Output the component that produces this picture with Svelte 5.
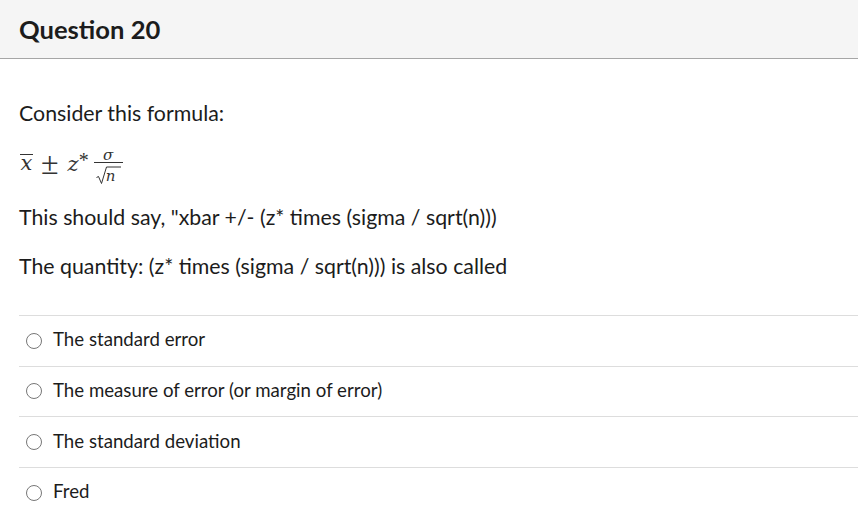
<script>
  const answers = [
    'The standard error',
    'The measure of error (or margin of error)',
    'The standard deviation',
    'Fred'
  ];
</script>

<div class="question">
  <div class="header"><h2>Question 20</h2></div>
  <div class="body">
    <p>Consider this formula:</p>
    <div class="formula">
      <span class="xbar">x</span>
      <span class="pm">±</span>
      <span class="z">z</span><span class="star">*</span>
      <span class="frac">
        <span class="num">σ</span>
        <span class="den">
          <svg class="rad" width="25" height="19" viewBox="0 0 25 19" aria-hidden="true">
            <path d="M0.5 11.5 L2.5 10.5 L5.5 17.5 L10.5 1 L25 1" fill="none" stroke="#333" stroke-width="1" />
          </svg>
          <span class="n">n</span>
        </span>
      </span>
    </div>
    <p>This should say, "xbar +/- (z* times (sigma / sqrt(n)))</p>
    <p>The quantity: (z* times (sigma / sqrt(n))) is also called</p>
  </div>
  <div class="answers">
    {#each answers as answer}
      <label class="answer">
        <span class="radio"></span>
        <span class="text">{answer}</span>
      </label>
    {/each}
  </div>
</div>

<style>
  :global(body) {
    background: #fff;
    color: #1c1c1c;
    font-family: Lato, "Liberation Sans", sans-serif;
  }

  .header {
    background: #f5f5f5;
    border-bottom: 1px solid #a6a6a6;
    height: 58px;
    padding: 0 19px;
    display: flex;
    align-items: center;
  }

  h2 {
    margin: -1px 0 0;
    font-size: 25.6px;
    font-weight: 700;
    color: #1c1c1c;
  }

  .body {
    padding: 41px 19px 0;
    height: 256px;
    box-sizing: border-box;
  }

  p {
    margin: 0 0 23px;
    font-size: 21.33px;
    line-height: 26px;
  }

  .formula {
    display: flex;
    align-items: center;
    height: 40px;
    margin: -6px 0 21px;
    padding-left: 1px;
    font-family: "DejaVu Serif", "Liberation Serif", serif;
    font-size: 21px;
    color: #333;
  }

  .xbar {
    border-top: 1px solid #333;
    font-style: italic;
    line-height: 17px;
    width: 13px;
    text-align: center;
    margin: 0 8px 0 0;
  }

  .pm {
    font-family: "Liberation Serif", serif;
    font-size: 32px;
    font-weight: 400;
    margin: 1px 9px 0 0;
  }

  .z { font-style: italic; margin-top: 2px; }

  .star {
    font-family: "Liberation Serif", serif;
    font-size: 20px;
    align-self: flex-start;
    margin: 6px 5px 0 0;
  }

  .frac {
    display: inline-flex;
    flex-direction: column;
    align-items: center;
    width: 29px;
    margin-top: 7px;
    font-size: 15px;
    font-style: italic;
  }

  .num {
    border-bottom: 1px solid #333;
    width: 100%;
    text-align: center;
    line-height: 14px;
  }

  .den {
    position: relative;
    width: 25px;
    height: 22px;
    padding-top: 3px;
    box-sizing: border-box;
  }

  .rad { display: block; }

  /* sits under the radical's bar */
  .n {
    position: absolute;
    left: 10px;
    top: 3px;
    line-height: 20px;
  }

  .answers {
    display: flex;
    flex-direction: column;
    margin-left: 19px;
  }

  .answer {
    display: flex;
    align-items: center;
    gap: 11px;
    height: 49.67px;
    padding-left: 7px;
    border-top: 1px solid #ddd;
    font-size: 18.67px;
  }

  .text { margin-top: -3px; }

  .radio {
    width: 14px;
    height: 14px;
    border: 1px solid #777;
    border-radius: 50%;
    background: #fff;
  }
</style>
